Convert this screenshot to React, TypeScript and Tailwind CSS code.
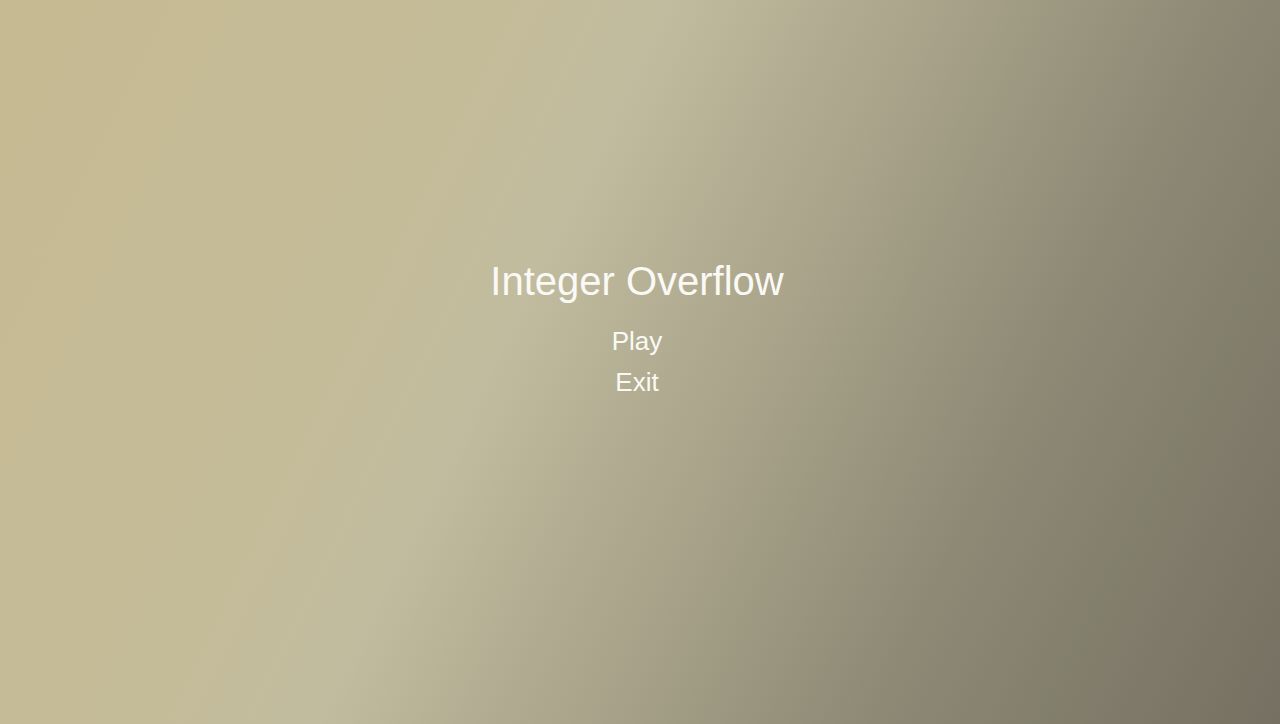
import React from 'react';

const App: React.FC = () => {
  return (
    <div className="w-full h-screen overflow-hidden bg-[linear-gradient(116deg,#c6ba92_0%,#c4bb98_30%,#c1bc9f_41%,#a9a48a_57%,#8d8975_75%,#757061_100%)] flex flex-col items-center justify-center pb-[68px] pr-[6px] font-['Liberation_Sans',Arial,sans-serif] text-[#faf9f5] select-none">
      <h1 className="text-[40px] leading-[40px] font-normal">Integer Overflow</h1>
      <div className="mt-[27px] flex flex-col items-center gap-[15px]">
        <button className="text-[26px] leading-[26px] cursor-pointer hover:text-white">Play</button>
        <button className="text-[26px] leading-[26px] cursor-pointer hover:text-white">Exit</button>
      </div>
    </div>
  );
};

export default App;
